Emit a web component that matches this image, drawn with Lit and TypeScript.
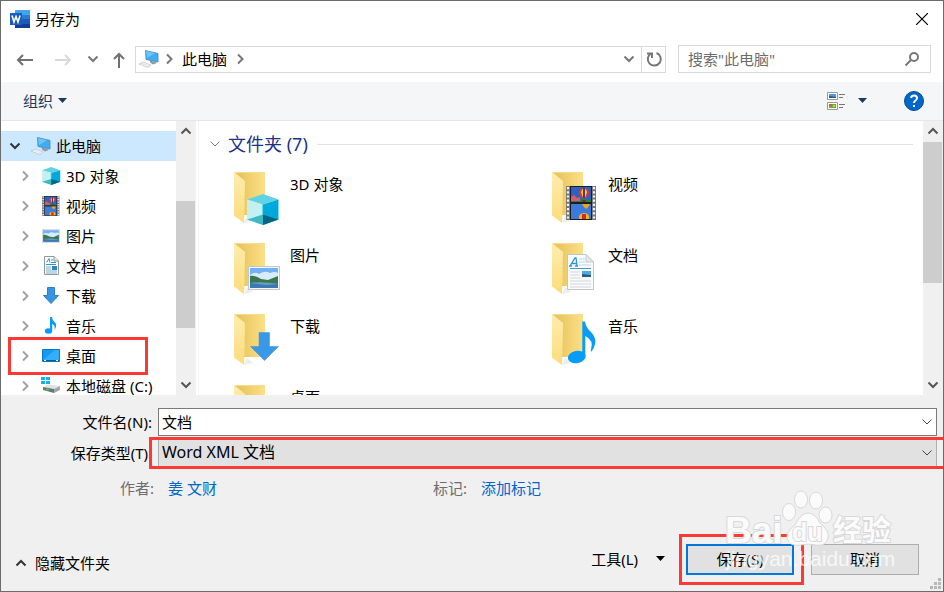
import { LitElement, html, svg, css, nothing } from "lit";
import { customElement, property, state } from "lit/decorators.js";
import { classMap } from "lit/directives/class-map.js";

type Kind = "pc" | "cube" | "video" | "picture" | "document" | "download" | "music" | "desktop" | "disk";

const cube = (x: number, y: number, s: number) => svg`
  <g transform="translate(${x} ${y}) scale(${s})">
    <path d="M16 0 31.500 5.500 16 10.500 0 5.500Z" fill="#5fd3e4"/>
    <path d="M0 5.500 16 10.500V31L0 25.500Z" fill="#c5f0f2"/>
    <path d="M31.500 5.500 16 10.500V31L31.500 25.500Z" fill="#00a9dc"/>
    <path d="M0 25.500 16 20.500V31Z" fill="#3fb9c6"/>
    <path d="M31.500 25.500 16 20.500V31Z" fill="#006684"/>
    <path d="M16 10.500V21" stroke="#00bcd8"/>
  </g>`;

const balloon = (x: number, y: number) => svg`
  <g transform="translate(${x} ${y})">
    <path d="M-5 0A5 5 0 0 1 5 0Q4 4 0 6Q-4 4-5 0Z" fill="#e8322c"/>
    <path d="M-3-1Q-2-4 0-5Q2-4 3-1L1 5H-1Z" fill="#ffd21f"/>
    <path d="M-1-5H1V5H-1Z" fill="#3b3a8c"/>
    <path d="M-1.500 7H1.500V9H-1.500Z" fill="#7a2d12"/>
  </g>`;

const film = (x: number, y: number, s: number) => svg`
  <g transform="translate(${x} ${y}) scale(${s})">
    <path d="M0 0H30V34H0Z" fill="#777"/>
    <path d="M4 0H26V34H4Z" fill="#1d1d1d"/>
    <path d="M5 1H25V16H5Z" fill="#2d62c0"/>
    <path d="M5 12L9 10L14 13L25 14V16H5Z" fill="#23843b"/>
    <path d="M5 11L8 9L11 12L14 11V15H5Z" fill="#e05573"/>
    <path d="M5 18H25V33H5Z" fill="#3c7bdc"/>
    ${balloon(18, 7)}
    <path d="M16 18H24Q22 22 20 23Q18 22 16 18Z" fill="#e8a51f"/>
    <path d="M13 31A5 4 0 0 1 23 31V33H13Z" fill="#f0b61f"/>
    <path d="M16 28H20V33H16Z" fill="#d5292c"/>
    <path d="M2 1V34M28 1V34" stroke="#f4f4f4" stroke-width="2.200" stroke-dasharray="2.200 2"/>
  </g>`;

const photo = (x: number, y: number, w: number, h: number) => svg`
  <svg x=${x} y=${y} width=${w} height=${h} viewBox="0 0 32 24" preserveAspectRatio="none">
    <path d="M0 0H32V24H0Z" fill="#c3c8cd"/>
    <path d="M1 1H31V23H1Z" fill="#f4f7fa"/>
    <path d="M2 2H30V22H2Z" fill="#73b1f7"/>
    <path d="M2 9Q7 5 11 8Q17 4 22 7Q27 5 30 7V14H2Z" fill="#d7ecfd"/>
    <path d="M2 10Q7 9 13 13L20 14L30 10V18H2Z" fill="#3a7650"/>
    <path d="M2 17H30V22H2Z" fill="#3b78b4"/>
    <path d="M2 17Q15 15 30 18L18 19Z" fill="#6a9fc0"/>
  </svg>`;

const overlays: Partial<Record<Kind, unknown>> = {
  cube: cube(14, 23, 1),
  video: film(15, 15, 1),
  picture: photo(15, 24, 32, 24),
  document: svg`
    <path d="M16.500 12.500H35L42.500 20V47.500H16.500Z" fill="#fafbfc" stroke="#bfc5ca"/>
    <path d="M35 12.500V20H42.500Z" fill="#e3e7ea" stroke="#c4cacf"/>
    <path d="M19 24L24 16H25L26 24M21 21.500H25.500M18 24H21M24 24H27" fill="none" stroke="#2f93d2" stroke-width="1.300"/>
    <path d="M28 17H34M28 20H34M28 23H40" stroke="#b8d8ed"/>
    <path d="M19 26.500H40" stroke="#3c9bd4"/>
    <path d="M19 30H29M19 33H29M19 36H29M19 39H40M19 42H40M19 45H40" stroke="#d2d6d9"/>
    <path d="M31 29H40V35H31Z" fill="#57a6dd"/><path d="M31 32L40 33V35H31Z" fill="#276284"/>`,
  download: svg`<path d="M26 19.500H36.500V33.500H45.500L31.500 47.500L17.500 33.500H26Z" fill="#3a98e8" stroke="#4f97cc" stroke-width=".6"/>`,
  music: svg`
    <ellipse cx="25.700" cy="44" rx="9" ry="6.200" transform="rotate(-12 25.700 44)" fill="#079cf8"/>
    <path d="M31.300 8.500H34Q35 15 40 19Q45.500 25 44 31Q43 36 40.500 38.500Q39 39 40 37Q43 27 34.300 23V44H31.300Z" fill="#079cf8"/>`,
  desktop: svg`<path d="M15 24H46V46H15Z" fill="#159cf2" stroke="#0b6fb8"/>`,
};

const folderIcon = (kind: Kind) => html`
  <svg class="folder" viewBox="0 0 48 56" aria-hidden="true">
    <defs>
      <linearGradient id="back" x1="0" x2="1"><stop offset=".2" stop-color="#e9c55e"/><stop offset="1" stop-color="#fce088"/></linearGradient>
      <linearGradient id="flap" x1="0" x2="0" y1="0" y2="1"><stop offset="0" stop-color="#ffedae"/><stop offset="1" stop-color="#fddb7b"/></linearGradient>
    </defs>
    <path d="M11 52L20 50L14 45Z" fill="#eee"/>
    <path d="M1 1H32V44H1Z" fill="url(#back)"/>
    <path d="M1 1.500H32" stroke="#f7dc8f"/>
    <path d="M1 1L12 10L11.500 36L11 52L1 44.500Z" fill="url(#flap)"/>
    ${overlays[kind] ?? nothing}
  </svg>`;

const smallArt: Record<Kind, unknown> = {
  pc: svg`
    <path d="M6.500 1.500L19 4.500V13L7 10.500Z" fill="#3fadf3" stroke="#4a86ad" stroke-width=".8"/>
    <path d="M7 2L16 4.200L8 9Z" fill="#6cc4ff"/>
    <path d="M11 11.500L15 12.500L18 14L14 15.500L11 13.500Z" fill="#8d99a3"/>
    <path d="M0 15L4 13L12 16L9 18.500Z" fill="#dde2e6" stroke="#b6bec5" stroke-width=".6"/>
    <path d="M2 15L9 17.500M4 14L11 16.500" stroke="#fafbfc" stroke-width=".7"/>`,
  cube: cube(1, 1, 0.58),
  video: film(1, 0, 0.58),
  picture: photo(1, 3, 18, 14),
  document: svg`
    <path d="M3.500 .5H13L17.500 5V18.500H3.500Z" fill="#fff" stroke="#8f969c"/>
    <path d="M13 .5V5H17.500" fill="#dfe6ea" stroke="#8f969c"/>
    <path d="M5.500 6.500L8 2.500L9 6.500M10 4H12M10 6.500H15M5 8.500H15" fill="none" stroke="#2c93cf"/>
    <path d="M5 11H10M5 13H10M5 15H16M5 17H16" stroke="#7dabc4"/>
    <path d="M11 10H16V14H11Z" fill="#2d89bc"/>`,
  download: svg`<path d="M6.500 1.500H13.500V9.500H17.500L10 17.500L2.500 9.500H6.500Z" fill="#3794e2" stroke="#2c7dc2"/>`,
  music: svg`
    <ellipse cx="7.500" cy="15" rx="3.700" ry="2.700" fill="#079cf8"/>
    <path d="M9 1H11Q11 4 14 6.500Q16.500 9.500 13.500 14Q14.500 9 11.200 8V15H9Z" fill="#079cf8"/>`,
  desktop: svg`
    <path d="M1.500 3.500H18.500V15.500H1.500Z" fill="#149bf0" stroke="#0b76c4"/>
    <path d="M2 14L14 4H18V14Z" fill="#35aefa"/>
    <path d="M2 14.500H18" stroke="#075a9a"/><path d="M3 14.500H5M15 14.500H17" stroke="#fff"/>`,
  disk: svg`
    <path d="M0 1H4V4H0ZM5 1H9V4H5ZM0 5H4V8H0ZM5 5H9V8H5Z" fill="#14b1ef"/>
    <path d="M2 11L8 8.500L19 10L13 13Z" fill="#dfe1e3"/>
    <path d="M2 11L13 13V17L2 14Z" fill="#6e7377"/>
    <path d="M13 13L19 10V14L13 17Z" fill="#a2a7ab"/>
    <path d="M5 13.500H8" stroke="#44d63c" stroke-width="1.500"/>`,
};

const smallIcon = (kind: Kind) =>
  html`<svg class="small" viewBox="0 0 20 20" aria-hidden="true">${smallArt[kind]}</svg>`;

const chevrons = {
  up: "M1.500 8.500L6 4L10.500 8.500",
  down: "M1.500 3.500L6 8L10.500 3.500",
  right: "M4 1.500L8.500 6L4 10.500",
};
const chevron = (dir: keyof typeof chevrons, cls = "") =>
  html`<svg class="chev ${cls}" viewBox="0 0 12 12" aria-hidden="true"><path d=${chevrons[dir]} /></svg>`;
const caret = html`<svg class="caret" viewBox="0 0 10 6" aria-hidden="true"><path d="M0 0H9L4.500 5Z" /></svg>`;

@customElement("scroll-bar")
class ScrollBar extends LitElement {
  @property({ type: Number }) start = 0;
  @property({ type: Number }) size = 50;
  static styles = css`
    :host { display: flex; flex-direction: column; flex: 0 0 20px; background: #f0f0f0; }
    button { border: 0; padding: 0; margin: 0; height: 20px; background: none; display: grid; place-items: center; }
    svg { width: 12px; height: 12px; }
    path { fill: none; stroke: #555; stroke-width: 2; }
    .track { flex: 1; display: flex; flex-direction: column; }
    .thumb { background: #cdcdcd; margin-right: 1px; }
  `;
  render() {
    return html`
      <button aria-label="向上滚动">${chevron("up")}</button>
      <div class="track">
        <div style="height:${this.start}%"></div>
        <div class="thumb" style="height:${this.size}%"></div>
      </div>
      <button aria-label="向下滚动">${chevron("down")}</button>`;
  }
}

@customElement("app-root")
class AppRoot extends LitElement {
  @state() private fileName = "文档";

  private tree: { kind: Kind; name: string; marked?: boolean }[] = [
    { kind: "cube", name: "3D 对象" },
    { kind: "video", name: "视频" },
    { kind: "picture", name: "图片" },
    { kind: "document", name: "文档" },
    { kind: "download", name: "下载" },
    { kind: "music", name: "音乐" },
    { kind: "desktop", name: "桌面", marked: true },
    { kind: "disk", name: "本地磁盘 (C:)" },
  ];
  private folders: { kind: Kind; name: string }[] = [
    { kind: "cube", name: "3D 对象" },
    { kind: "video", name: "视频" },
    { kind: "picture", name: "图片" },
    { kind: "document", name: "文档" },
    { kind: "download", name: "下载" },
    { kind: "music", name: "音乐" },
    { kind: "desktop", name: "桌面" },
  ];

  static styles = css`
    :host {
      display: flex; flex-direction: column; box-sizing: border-box; position: relative;
      height: 100vh; overflow: hidden; border: 1px solid #6b6b6b; background: #fff; color: #000;
      font: 15px/20px "Noto Sans", "Noto Sans CJK SC", sans-serif;
    }
    * { box-sizing: border-box; }
    button, input, select { font: inherit; color: inherit; margin: 0; padding: 0; border: 0; background: none; border-radius: 0; }
    a { color: inherit; text-decoration: none; }
    ul { list-style: none; margin: 0; padding: 0; }
    svg { display: block; flex: none; }
    .chev { width: 12px; height: 12px; }
    .chev path { fill: none; stroke: #777; stroke-width: 2; }
    .chev.thin path { stroke-width: 1; stroke: #444; }
    .chev.dark path { stroke: #333; }
    .chev.pale path { stroke: #a3a3a3; }
    .caret { width: 10px; height: 6px; }
    .small { width: 20px; height: 20px; }

    .title { display: flex; align-items: center; height: 37px; padding: 0 15px 2px 9px; gap: 5px; }
    .title h1 { font: inherit; margin: 0; flex: 1; }
    .word { width: 20px; height: 18px; }

    .nav { display: flex; align-items: center; height: 44px; padding: 0 12px 2px 14px; }
    .nav > button { display: grid; place-items: center; height: 24px; }
    .arrow { width: 20px; height: 20px; fill: none; stroke: #707070; stroke-width: 2; }
    .off .arrow { stroke: #dadada; }
    .back { width: 20px; margin-right: 18px; }
    .off { width: 20px; margin-right: 14px; }
    .recent { width: 12px; margin-right: 10px; }
    .upward { width: 20px; margin-right: 6px; }
    .address { display: flex; align-items: center; flex: 1; height: 27px; border: 1px solid #d9d9d9; padding-left: 3px; }
    .crumbs { display: flex; align-items: center; flex: 1; gap: 7px; }
    .crumbs .small { margin-right: -3px; }
    .address > button { display: grid; place-items: center; width: 24px; height: 25px; }
    .address .refresh { border-left: 1px solid #d9d9d9; }
    .refresh svg { width: 18px; height: 18px; fill: none; stroke: #777; stroke-width: 2; }
    .search { display: flex; align-items: center; width: 253px; height: 28px; margin-left: 12px; border: 1px solid #d9d9d9; padding: 0 10px 0 9px; }
    .search input { flex: 1; min-width: 0; outline: 0; }
    .search input::placeholder { color: #6d6d6d; opacity: 1; }
    .search svg { width: 16px; height: 16px; fill: none; stroke: #777; stroke-width: 2; }

    .tools { display: flex; align-items: center; height: 39px; padding: 0 18px 0 22px; background: #f4f6f8; border-bottom: 1px solid #e4e7ea; color: #1e395b; }
    .tools button { display: flex; align-items: center; gap: 5px; }
    .tools .caret { fill: #1e395b; }
    .view { margin-left: auto; margin-right: 35px; }
    .tools .view { gap: 13px; }
    .thumbs { width: 18px; height: 20px; }
    .help { width: 22px; height: 22px; }

    .panes { flex: 1 1 0; min-height: 0; display: flex; overflow: hidden; }
    .tree { flex: 0 0 175px; padding-top: 10px; overflow: hidden; }
    .node { position: relative; display: flex; align-items: center; height: 30px; padding-left: 18px; }
    .node a { display: flex; align-items: center; gap: 5px; margin-left: 10px; white-space: nowrap; }
    .node.root { padding-left: 8px; background: #cce8ff; }
    .node button { display: block; }
    .node.marked::after { content: ""; position: absolute; inset: -4px 28px -4px 7px; border: 3px solid #fb3a36; z-index: 1; }
    .split { width: 3px; border-right: 1px solid #f5f5f5; }
    .files { flex: 1; min-width: 0; overflow: hidden; padding: 7px 10px 0 10px; }
    .group { display: flex; align-items: center; gap: 7px; height: 32px; margin: 0 0 11px; font-size: 18px; line-height: 24px; font-weight: 400; color: #1e3287; }
    .group .chev path { stroke: #777; }
    .group::after { content: ""; flex: 1; height: 1px; background: #e2e2e2; margin-left: 2px; }
    .grid { display: grid; grid-template-columns: repeat(auto-fill, 318px); grid-auto-rows: 71px; padding-left: 24px; }
    .grid a { display: flex; gap: 9px; line-height: 26px; }
    .folder { width: 48px; height: 56px; }

    .form { background: #f0f0f0; padding: 13px 6px 0 0; }
    .fields { display: grid; grid-template-columns: 151px 1fr; column-gap: 6px; row-gap: 2px; align-items: center; }
    .fields label { text-align: right; white-space: nowrap; padding-bottom: 1px; }
    .box { position: relative; display: flex; align-items: center; }
    .box input, .box select { width: 100%; appearance: none; outline: 0; padding: 0 28px 2px 3px; height: 28px; }
    .box input { background: #fff; border: 1px solid #7a7a7a; }
    .box select { background: #e1e1e1; border: 1px solid #adadad; height: 30px; font-size: 16px; }
    .box .chev { position: absolute; right: 4px; pointer-events: none; }
    .box.marked::after { content: ""; position: absolute; inset: -1px -9px -1px -9px; border: 3px solid #fb3a36; pointer-events: none; }
    .meta { display: flex; padding: 10px 0 0 119px; color: #6d6d6d; }
    .meta div { flex: 0 1 313px; display: flex; gap: 14px; white-space: nowrap; }
    .meta a { color: #0066cc; }

    .footer { display: flex; align-items: center; background: #f0f0f0; padding: 46px 24px 16px 14px; }
    .footer button { display: flex; align-items: center; justify-content: center; white-space: nowrap; padding-bottom: 2px; }
    .footer .hide { gap: 8px; margin-right: auto; padding-top: 8px; }
    .more { gap: 18px; margin-right: 20px; }
    .footer .push { position: relative; width: 108px; height: 31px; background: #e1e1e1; border: 1px solid #adadad; margin-left: 17px; }
    .footer .primary { border: 2px solid #0078d7; margin-left: 0; }
    .primary::after { content: ""; position: absolute; inset: -12px -12px -12px -9px; border: 3px solid #fb3a36; }
    .grip { position: absolute; right: 1px; bottom: 1px; width: 12px; height: 12px; fill: #b8b8b8; }
    .mark { position: absolute; right: 44px; bottom: 14px; width: 176px; height: 90px; pointer-events: none; }
    .mark text { font-family: "Liberation Sans", "Noto Sans CJK SC", sans-serif; }
    .logo { font-weight: 700; fill: #fbfbfb; stroke: #d8d8d8; stroke-width: 2px; paint-order: stroke; }
    .paw { fill: #fbfbfb; stroke: #d8d8d8; stroke-width: 1px; }
    .site { font-size: 21px; fill: #fff; opacity: 0.75; }
  `;

  private node(n: { kind: Kind; name: string; marked?: boolean }) {
    return html`<li class=${classMap({ node: true, marked: !!n.marked })}>
      <button aria-label="展开 ${n.name}">${chevron("right", "pale")}</button>
      <a href="#">${smallIcon(n.kind)}${n.name}</a>
    </li>`;
  }

  render() {
    return html`
      <header class="title">
        <svg class="word" viewBox="0 0 20 18" aria-hidden="true">
          <path d="M5 0H20V5H5Z" fill="#41a5ee"/><path d="M5 5H20V9H5Z" fill="#2b7cd3"/>
          <path d="M5 9H20V14H5Z" fill="#185abd"/><path d="M5 14H20V18H5Z" fill="#103f91"/>
          <path d="M0 3H12V15H0Z" fill="#185abd"/>
          <path d="M2 5.500L4 12L6 6.500L8 12L10 5.500" fill="none" stroke="#fff" stroke-width="1.600"/>
        </svg>
        <h1>另存为</h1>
        <button aria-label="关闭"><svg width="12" height="12" viewBox="0 0 12 12"><path d="M0 0L12 12M12 0L0 12" stroke="#000" stroke-width="1.200"/></svg></button>
      </header>

      <nav class="nav">
        <button class="back" aria-label="后退"><svg class="arrow" viewBox="0 0 20 20"><path d="M18 11H3M8 6L3 11L8 16"/></svg></button>
        <button class="off" aria-label="前进" disabled><svg class="arrow" viewBox="0 0 20 20"><path d="M2 11H17M12 6L17 11L12 16"/></svg></button>
        <button class="recent" aria-label="最近位置">${chevron("down")}</button>
        <button class="upward" aria-label="上移"><svg class="arrow" viewBox="0 0 20 20"><path d="M10 19V5M5 10L10 5L15 10"/></svg></button>
        <div class="address">
          <div class="crumbs">${smallIcon("pc")}${chevron("right")}<a href="#">此电脑</a>${chevron("right")}</div>
          <button aria-label="展开地址">${chevron("down")}</button>
          <button class="refresh" aria-label="刷新"><svg viewBox="0 0 18 18"><path d="M11.500 3A6.500 6.500 0 1 1 6 3.500M2 3.500H7V8"/></svg></button>
        </div>
        <div class="search">
          <input type="search" aria-label="搜索" placeholder='搜索"此电脑"' />
          <svg viewBox="0 0 16 16" aria-hidden="true"><circle cx="10" cy="6" r="4"/><path d="M7 9L1.500 14.500"/></svg>
        </div>
      </nav>

      <div class="tools">
        <button>组织 ${caret}</button>
        <button class="view" aria-label="更改视图">
          <svg class="thumbs" viewBox="0 0 18 20">
            <path d="M.5 1.500H10.500V8.500H.5ZM.5 11.500H10.500V18.500H.5Z" fill="#fff" stroke="#999"/>
            <path d="M2 3H9V7H2Z" fill="#4d9be0"/><path d="M2 5L9 6V7H2Z" fill="#245f7a"/>
            <path d="M2 13H9V17H2Z" fill="#6aae35"/><path d="M2 13H5V15H2Z" fill="#e4563a"/><path d="M6 14H8V16H6Z" fill="#f4c42c"/>
            <path d="M12 3.500H18M12 6.500H16M12 13.500H18M12 16.500H16" stroke="#777"/>
          </svg>
          ${caret}
        </button>
        <button aria-label="帮助">
          <svg class="help" viewBox="0 0 22 22">
            <circle cx="11" cy="11" r="9.500" fill="#0067c8" stroke="#0a4a91"/>
            <path d="M8 8Q8.500 5.500 11 5.500Q14 5.500 14 8Q14 9.500 12.500 10.500Q11 11.500 11 13" fill="none" stroke="#fff" stroke-width="2"/>
            <path d="M10 15H12V17H10Z" fill="#fff"/>
          </svg>
        </button>
      </div>

      <main class="panes">
        <ul class="tree">
          <li class="node root"><button aria-label="折叠 此电脑">${chevron("down", "dark")}</button><a href="#">${smallIcon("pc")}此电脑</a></li>
          ${this.tree.map((n) => this.node(n))}
        </ul>
        <scroll-bar .start=${25.500} .size=${54.500}></scroll-bar>
        <div class="split"></div>
        <section class="files">
          <h2 class="group">${chevron("down", "thin")}<span>文件夹 (7)</span></h2>
          <ul class="grid">
            ${this.folders.map((f) => html`<li><a href="#">${folderIcon(f.kind)}<span>${f.name}</span></a></li>`)}
          </ul>
        </section>
        <scroll-bar .start=${0.500} .size=${60}></scroll-bar>
      </main>

      <section class="form">
        <div class="fields">
          <label for="name">文件名(N):</label>
          <div class="box">
            <input id="name" type="text" .value=${this.fileName}
              @input=${(e: Event) => (this.fileName = (e.target as HTMLInputElement).value)} />
            ${chevron("down", "thin")}
          </div>
          <label for="type">保存类型(T):</label>
          <div class="box marked">
            <select id="type"><option>Word XML 文档</option></select>
            ${chevron("down", "thin")}
          </div>
        </div>
        <div class="meta">
          <div><span>作者:</span><a href="#">姜 文财</a></div>
          <div><span>标记:</span><a href="#">添加标记</a></div>
        </div>
      </section>

      <footer class="footer">
        <button class="hide">${chevron("up", "dark")}隐藏文件夹</button>
        <button class="more">工具(L) ${caret}</button>
        <button class="push primary">保存(S)</button>
        <button class="push">取消</button>
      </footer>

      <svg class="mark" viewBox="0 0 176 90" aria-hidden="true">
        <g class="paw">
          <ellipse cx="66" cy="25" rx="6.500" ry="8.500"/><ellipse cx="78" cy="12.500" rx="6.500" ry="8.500"/>
          <ellipse cx="93" cy="13.500" rx="6.500" ry="8.500"/><ellipse cx="102.500" cy="28" rx="6.500" ry="8"/>
          <path d="M85 26Q92 26 97 36Q107 44 105 51Q103 60 92 58Q85 56 78 58Q65 60 64 50Q64 44 72 38Q78 26 85 26Z"/>
        </g>
        <text class="logo" x="2" y="56" font-size="37">Bai</text>
        <text class="logo" x="69" y="54" font-size="25">du</text>
        <text class="logo" x="110" y="54" font-size="29">经验</text>
        <text class="site" x="3" y="79">jingyan.baidu.com</text>
      </svg>
      <svg class="grip" viewBox="0 0 12 12" aria-hidden="true"><path d="M8 0H11V3H8ZM4 4H7V7H4ZM8 4H11V7H8ZM0 8H3V11H0ZM4 8H7V11H4ZM8 8H11V11H8Z"/></svg>
    `;
  }
}
